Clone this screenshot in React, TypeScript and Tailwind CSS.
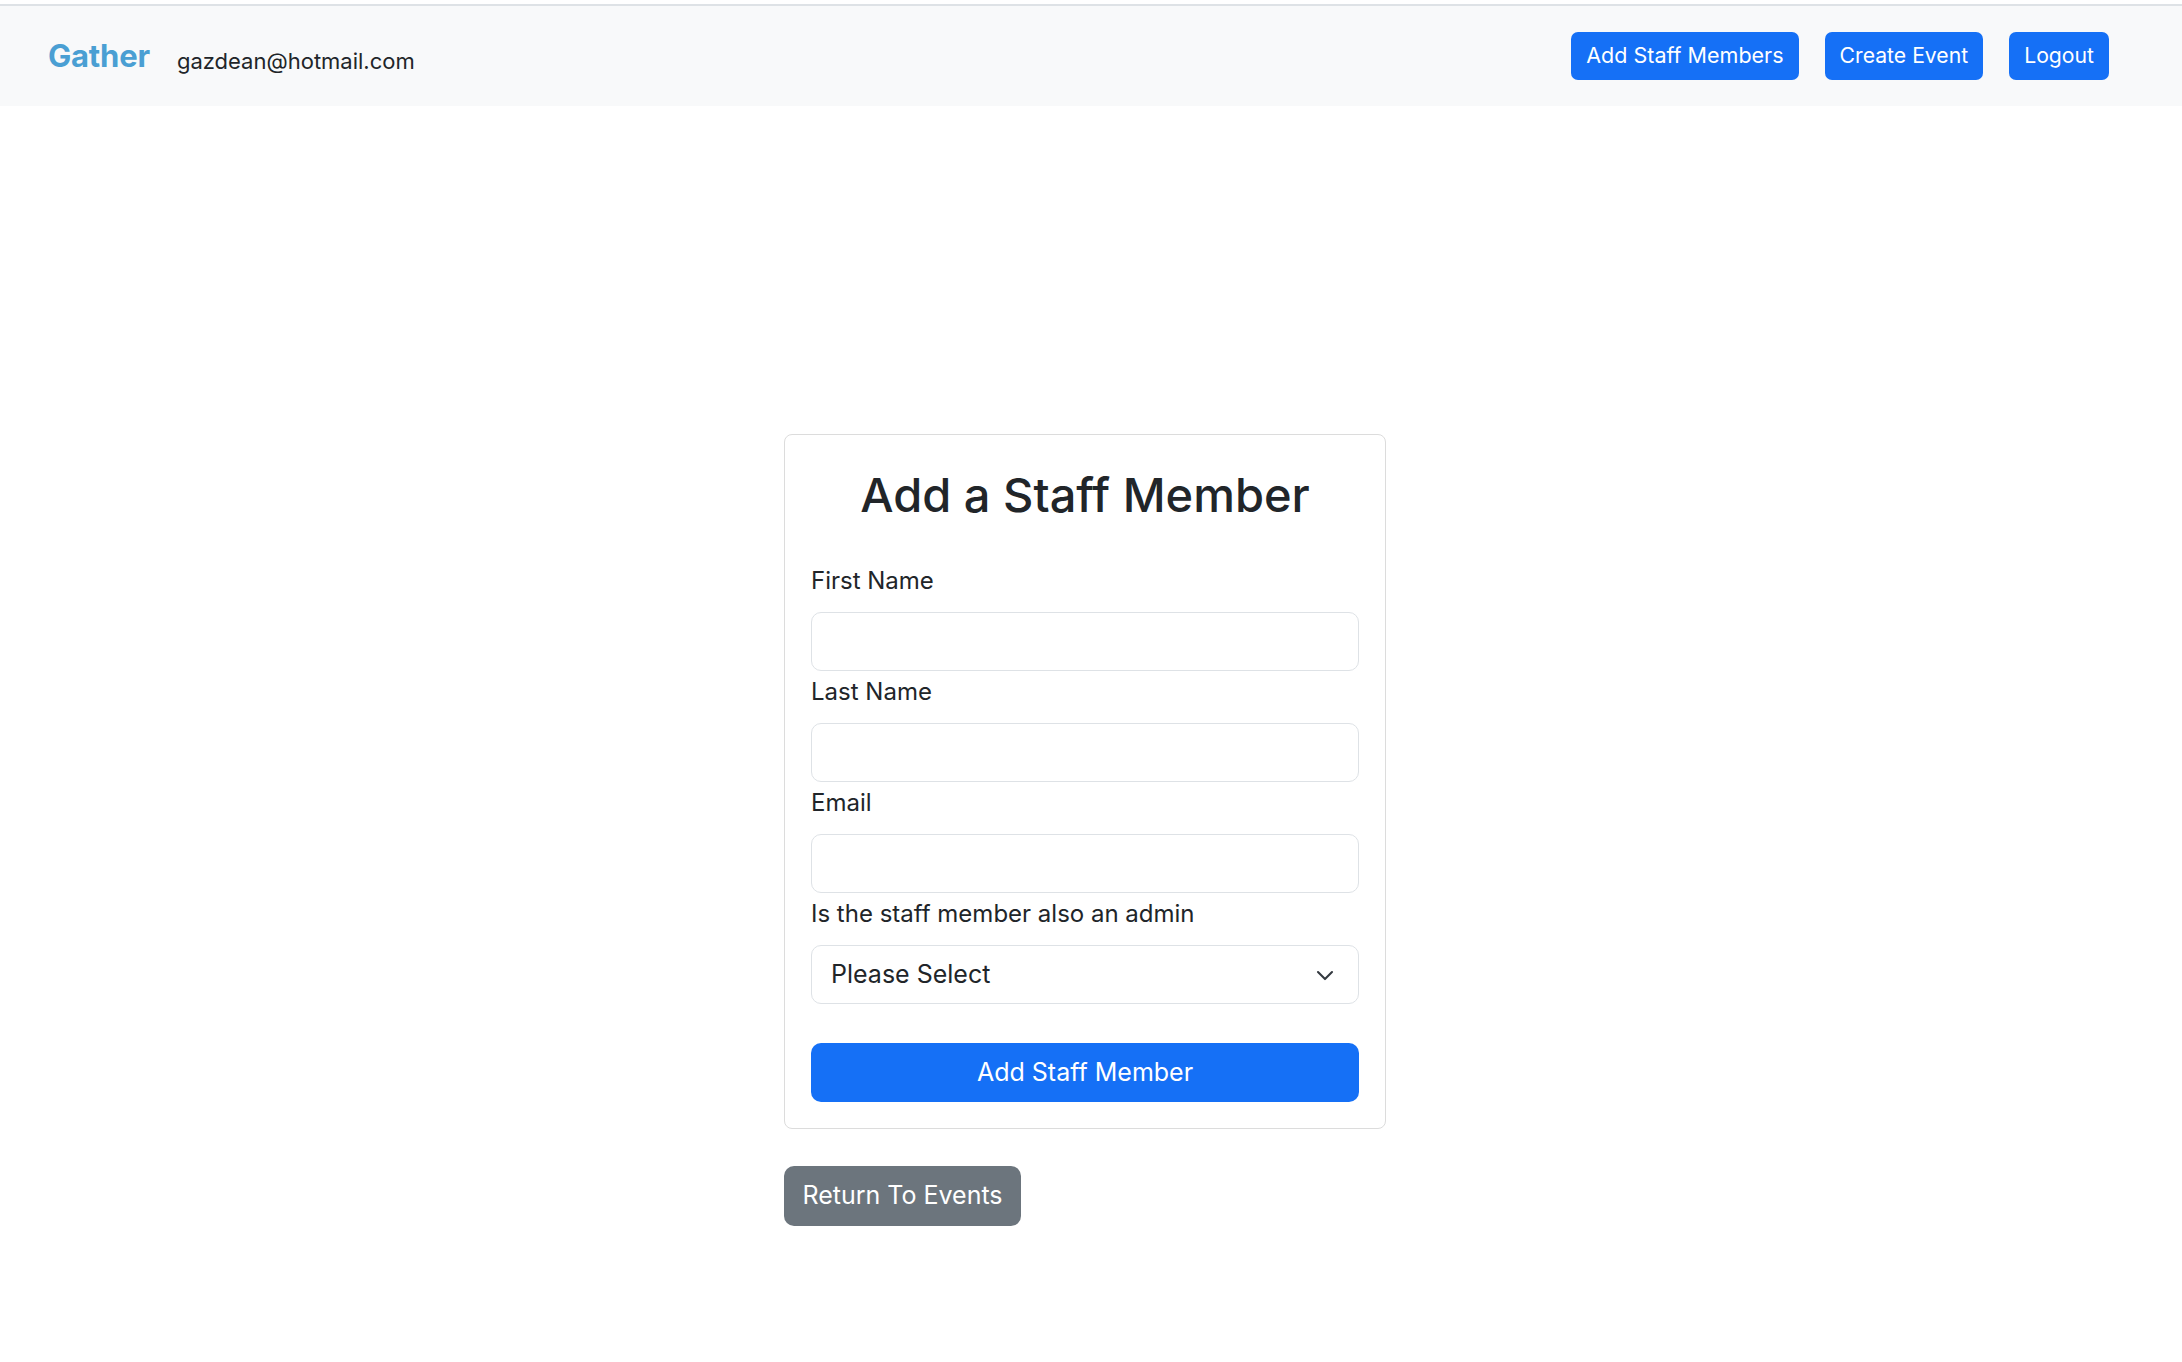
import React from "react";

function Field({ label, children }: { label: string; children: React.ReactNode }) {
  return (
    <div className="flex flex-col">
      <label className="block text-[24px] leading-[36px] text-[#212529] mb-[13px]">{label}</label>
      {children}
    </div>
  );
}

export default function App() {
  return (
    <div className="min-h-[1362px] bg-white font-['Inter','Noto_Sans',sans-serif] text-[#212529]">
      <div className="h-[4px] bg-white" />
      <div className="h-[2px] bg-[#dee2e6]" />
      <nav className="h-[100px] bg-[#f8f9fa] flex items-center justify-between pl-[48px] pr-[73px]">
        <div className="flex items-center">
          <span className="text-[31px] font-bold text-[#4a9fd3] tracking-[-0.2px]">Gather</span>
          <span className="ml-[27px] mt-[10px] text-[22px] text-[#212529]">gazdean@hotmail.com</span>
        </div>
        <div className="flex items-center gap-[26px]">
          <button className="h-[48px] px-[15px] rounded-[7px] bg-[#1570f6] text-white text-[21.5px] leading-none">Add Staff Members</button>
          <button className="h-[48px] px-[15px] rounded-[7px] bg-[#1570f6] text-white text-[21.2px] leading-none">Create Event</button>
          <button className="h-[48px] px-[15px] rounded-[7px] bg-[#1570f6] text-white text-[21.2px] leading-none">Logout</button>
        </div>
      </nav>
      <main className="flex justify-center pr-[12px] pt-[328px]">
        <div className="w-[602px] flex flex-col">
          <div className="border border-[#dcdcdc] rounded-[8px] px-[26px] pt-[33px] pb-[26px] flex flex-col">
            <h1 className="text-center text-[47px] leading-[54px] font-medium text-[#212529] mb-[41px]">Add a Staff Member</h1>
            <div className="flex flex-col gap-[3px]">
              <Field label="First Name">
                <input className="h-[59px] w-full border border-[#dee2e6] rounded-[10px] bg-white outline-none px-[19px] text-[25px]" />
              </Field>
              <Field label="Last Name">
                <input className="h-[59px] w-full border border-[#dee2e6] rounded-[10px] bg-white outline-none px-[19px] text-[25px]" />
              </Field>
              <Field label="Email">
                <input className="h-[59px] w-full border border-[#dee2e6] rounded-[10px] bg-white outline-none px-[19px] text-[25px]" />
              </Field>
              <Field label="Is the staff member also an admin">
                <div className="h-[59px] w-full border border-[#dee2e6] rounded-[10px] bg-white flex items-center justify-between pl-[19px] pr-[23px]">
                  <span className="text-[25px] text-[#212529]">Please Select</span>
                  <svg width="20" height="14" viewBox="0 0 16 12" fill="none">
                    <path d="M2 3.5l6 6 6-6" stroke="#343a40" strokeWidth="1.8" strokeLinecap="round" strokeLinejoin="round" />
                  </svg>
                </div>
              </Field>
            </div>
            <button className="mt-[39px] h-[59px] w-full rounded-[10px] bg-[#1570f6] text-white text-[25px]">Add Staff Member</button>
          </div>
          <div className="mt-[37px]">
            <button className="h-[60px] w-[237px] rounded-[10px] bg-[#6c757d] text-white text-[25px]">Return To Events</button>
          </div>
        </div>
      </main>
    </div>
  );
}
